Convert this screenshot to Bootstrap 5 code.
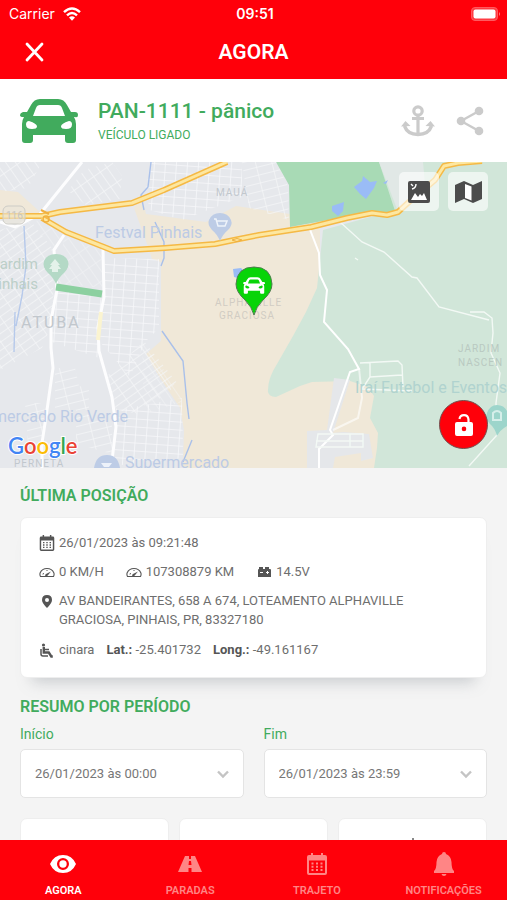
<!DOCTYPE html>
<html lang="pt-BR">
<head>
<meta charset="utf-8">
<meta name="viewport" content="width=device-width, initial-scale=1">
<title>Agora</title>
<link href="https://cdn.jsdelivr.net/npm/bootstrap@5.3.0/dist/css/bootstrap.min.css" rel="stylesheet">
<style>
  body { font-family: Roboto, sans-serif; background: #f4f4f4; color: #6e6e6e; font-size: 14px; line-height: 20px; }
  svg { display: block; flex: none; }
  .brand-bg { background: #ff000a; color: #fff; }
  .status-bar { height: 28px; font-family: Inter, sans-serif; font-size: 14px; padding: 0 6px 0 9px; }
  .side { flex: 1 1 0; }
  .title-bar { height: 51px; padding: 0 22px 3px; }
  .title-bar h1 { font-size: 21px; line-height: 24px; font-weight: 600; }
  .green { color: #41ab5d; }
  .vehicle { height: 83px; padding: 0 22px 0 20px; background: #fff; }
  .vehicle h2 { font-size: 21px; line-height: 24px; font-weight: 500; }
  .vehicle p { font-size: 12px; line-height: 16px; padding-top: 4px; }
  .plain { background: none; border: 0; padding: 0; color: inherit; }
  .vehicle .pale { color: #cbcbcb; }
  .map-area { height: 306px; }
  .map-tools { top: 10px; right: 19px; gap: 9px; }
  .map-tool { width: 40px; height: 39px; border: 0; border-radius: 5px; background: rgba(255,255,255,.6); color: #4c4c4c; padding: 0; }
  .unlock { right: 19px; bottom: 19px; width: 49px; height: 49px; border: 1px solid #70504f; padding: 0; }
  .content { padding: 18px 20px 0; }
  .content h3 { font-size: 16px; line-height: 20px; font-weight: 600; }
  .panel { background: #fff; border: 1px solid #eee; border-radius: 7px; }
  .position { padding: 15px 19px 17px 18px; margin-top: 11px; margin-bottom: 19px; font-size: 13px; box-shadow: 0 16px 14px -12px rgba(120,130,138,.35); }
  .ico { width: 16px; height: 16px; margin-right: 4px; color: #555; }
  .line-b { margin-top: 9px; gap: 22px; }
  .addr { margin-top: 9px; line-height: 19px; }
  .driver { margin-top: 11px; gap: 12px; }
  .driver strong { color: #555; font-weight: 700; }
  .period { margin-top: 7px; gap: 20px; }
  .period label { line-height: 20px; margin-bottom: 5px; }
  .period select { height: 49px; border: 1px solid #e4e4e4; border-radius: 5px; padding: 0 32px 0 14px; font-size: 13px; color: #777; background-color: #fff;
    background-image: url("data:image/svg+xml,%3Csvg xmlns='http://www.w3.org/2000/svg' viewBox='0 0 14 14'%3E%3Cpath d='M2 4.5l5 5 5-5' fill='none' stroke='%23c4c4c4' stroke-width='2.4'/%3E%3C/svg%3E"); background-size: 14px 14px; background-position: right 13px center; }
  .totals { margin-top: 20px; gap: 10px; }
  .totals .panel { height: 96px; padding-top: 19px; }
  .tabs { height: 60px; font-size: 11px; line-height: 12px; font-weight: 600; }
  .tabs a { flex: 1 1 0; color: #ff8585; padding: 10px 0 3px; }
  .tabs a.on { color: #fff; }
  .map-text { font-family: Roboto, sans-serif; }
</style>
<script src="https://cdn.jsdelivr.net/npm/bootstrap@5.3.0/dist/js/bootstrap.bundle.min.js"></script>
</head>
<body>
<svg width="0" height="0" class="position-absolute" aria-hidden="true">
  <symbol id="car" viewBox="0 0 58 44">
    <path fill-rule="evenodd" d="M20 0h18q6 0 9 6l4 7h4q3 0 3 3t-3 2h-1q2 3 2 7v16q0 3-3 3h-5q-3 0-3-3v-5H13v5q0 3-3 3H5q-3 0-3-3V25q0-4 2-7H3q-3 0-3-2t3-3h4l4-7q3-6 9-6zM20 6q-3 0-4 3l-3 8h32l-3-8q-1-3-4-3zM9 22q-3 0-3 3.500 0 4.500 6 4.500 5 0 5-2.500 0-3-8-5.500zM49 22q3 0 3 3.500 0 4.500-6 4.500-5 0-5-2.500 0-3 8-5.500z" fill="currentColor"/>
  </symbol>
  <symbol id="calendar" viewBox="0 0 20 22">
    <path fill-rule="evenodd" fill="currentColor" d="M4 0h2v2h8V0h2v2h2q2 0 2 2v16q0 2-2 2H2q-2 0-2-2V4q0-2 2-2h2zM2 7.500v12.500h16V7.500z"/>
    <path fill="currentColor" d="M4.500 9.500h2v2h-2zM9 9.500h2v2H9zM13.500 9.500h2v2h-2zM4.500 12.800h2v2h-2zM9 12.800h2v2H9zM13.500 12.800h2v2h-2zM4.500 16h2v2h-2zM9 16h2v2H9zM13.500 16h2v2h-2z"/>
  </symbol>
  <symbol id="gauge" viewBox="0 0 16 16">
    <path d="M1.500 12.500Q.5 10.500 1.200 8.800 3 4.500 8 4.500t6.800 4.300q.7 1.700-.3 3.700z" fill="none" stroke="currentColor" stroke-width="1.100"/>
    <path d="M6 11.500q0-1 1-1.500l5-2.500-3.500 4.200q-1.500 1-2.500-.2z" fill="currentColor"/><path d="M4 10.500l.5-1.500M7.500 6.500h1" stroke="currentColor"/>
  </symbol>
</svg>

<div class="d-flex flex-column vh-100 overflow-hidden">
  <header class="brand-bg flex-shrink-0">
    <div class="status-bar d-flex align-items-center">
      <div class="side d-flex align-items-center gap-2"><span>Carrier</span>
        <svg width="18" height="14" viewBox="0 0 18 14" fill="none" stroke="#fff" stroke-width="2.400"><path d="M1 5.200q8-7.600 16 0M4 8.400q5-4.700 10 0"/><path d="M6 10.600q3-2.600 6 0L9 13.800z" fill="#fff" stroke="none"/></svg>
      </div>
      <span class="fw-semibold">09:51</span>
      <div class="side d-flex justify-content-end">
        <svg width="30" height="14" viewBox="0 0 30 14"><rect x=".5" y=".5" width="26" height="13" rx="3.500" fill="#ff3b42" stroke="#ff5a5f"/><rect x="2.500" y="2.500" width="22" height="9" rx="2" fill="#fff"/><path d="M28 5q2 2 0 4z" fill="#ff7a7e"/></svg>
      </div>
    </div>
    <div class="title-bar d-flex align-items-center">
      <div class="side"><button class="plain d-block" type="button" aria-label="Fechar"><svg width="24" height="24" viewBox="0 0 24 24"><path d="M5 4l15 16M20 4L5 20" stroke="#fff" stroke-width="2.800" stroke-linecap="round"/></svg></button></div>
      <h1 class="m-0">AGORA</h1>
      <div class="side"></div>
    </div>
  </header>

  <section class="vehicle d-flex align-items-center flex-shrink-0">
    <svg class="green" width="58" height="44"><use href="#car"/></svg>
    <div class="green flex-grow-1 ps-3 ms-1">
      <h2 class="m-0">PAN-1111 - pânico</h2>
      <p class="m-0">VEÍCULO LIGADO</p>
    </div>
    <button class="plain pale me-3" type="button" aria-label="Âncora">
      <svg width="34" height="32" viewBox="0 0 34 32" fill="none" stroke="currentColor" stroke-width="3.200"><circle cx="17" cy="6" r="4.200"/><path d="M17 10v20M11 13.500h12"/><path d="M3.500 21q3 8.500 13.500 8.500T30.500 21" stroke-width="3.600"/><path d="M0 21.500L4.500 16l5 5zM34 21.500L29.500 16l-5 5z" fill="currentColor" stroke="none"/></svg>
    </button>
    <button class="plain pale ms-1" type="button" aria-label="Compartilhar">
      <svg width="30" height="30" viewBox="0 0 30 30"><path d="M24 5L6 15l18 10" fill="none" stroke="currentColor" stroke-width="2.400"/><g fill="currentColor"><circle cx="24" cy="5" r="4.300"/><circle cx="6" cy="15" r="4.300"/><circle cx="24" cy="25" r="4.300"/></g></svg>
    </button>
  </section>

  <section class="map-area position-relative flex-shrink-0 overflow-hidden">
    <svg class="map-text" width="100%" height="100%" viewBox="0 162 507 306" preserveAspectRatio="xMidYMid slice" role="img" aria-label="Mapa">
      <defs>
        <pattern id="g1" width="11" height="8" patternUnits="userSpaceOnUse" patternTransform="rotate(4)"><path d="M0 0H11M0 0V8" stroke="#f7f8fa" stroke-width="1.600"/></pattern>
        <pattern id="g2" width="14" height="7" patternUnits="userSpaceOnUse" patternTransform="rotate(-35)"><path d="M0 0H14M0 0V7" stroke="#f5f6f8" stroke-width="1.500"/></pattern>
        <pattern id="g3" width="16" height="8" patternUnits="userSpaceOnUse" patternTransform="rotate(-14)"><path d="M0 0H16M0 0V8" stroke="#f5f6f8" stroke-width="1.500"/></pattern>
        <pattern id="g4" width="18" height="8" patternUnits="userSpaceOnUse" patternTransform="rotate(55)"><path d="M0 0H18M0 0V8" stroke="#f5f6f8" stroke-width="1.500"/></pattern>
      </defs>
      <rect y="162" width="507" height="306" fill="#e6e8ec"/>
      <path d="M0 190l18 2 22 20v4H0z" fill="#f0e8d9"/>
      <path d="M134 208l8-11 4 17 60 8 30-16 54 8 30 12v60l60 100 4 82H183l1-38-4-22-20-30-14-24 15-13V262l-9-3-6-18z" fill="#f0e8d8"/>
      <path d="M378 162H507V468H374l3-20 1-15-8-15 4-22-6-9-18-6-38 1-12 4-24 11q-9-1-8-7 0-12 9-26l16-28 13-24 11-24 6-58 58-16z" fill="#d1e6d9"/>
      <path d="M276 162h103l16 49-10 4-15-2-31 5-49 9-1-42z" fill="#a8dab5"/>
      <path d="M379 162h44l2 22-28 25z" fill="#e1e8e6"/>
      <path d="M354 187l8-6 1-5 7 6 7-1-3 7-8 11-6-5zM332 206l12-4-1 9-5 5-6-5zM383 183l5-3-2 4zM233 269l8-1 5 5-4 6-8-2z" fill="#9abcf6"/>
      <path d="M334 378l16 2-17 53 10-1 26 2 4 24-12 3v-8l-26 4-2 11h-26v-37l20-1z" fill="#e5e7ea"/>
      <!-- street blocks -->
      <path d="M0 162h42l-14 26-28 4z" fill="url(#g4)"/>
      <path d="M84 170l28-8 10 14-2 23-34 6-18-14z" fill="url(#g4)"/>
      <path d="M152 162h90v35l-60 23-32-10-5-20z" fill="url(#g1)"/>
      <path d="M242 162h34l12 24 1 34-40-12z" fill="url(#g3)"/>
      <path d="M0 230l30-10 22 28 2 70-12 30-42 22z" fill="url(#g2)"/>
      <path d="M28 222l14-2 22 14-10 20zM64 236l38 14v38l-44-5z" fill="url(#g4)" opacity=".6"/>
      <path d="M56 288l46 10-3 60-47-16-2-30z" fill="url(#g1)"/>
      <path d="M105 258l54 1v69l-14 14-15 35-30-35z" fill="url(#g1)"/>
      <path d="M108 375l36-34 34 43-38 30-24-4z" fill="url(#g2)"/>
      <path d="M142 340l38 52 2 10-38 12z" fill="url(#g4)" opacity=".6"/>
      <path d="M118 410l64-12 1 60-70 8z" fill="url(#g1)"/>
      <path d="M55 368h20l4 18 10 2v22h-34zM25 403h20l-3 42H28zM76 410l36 14v30l-36-10z" fill="url(#g3)"/>
      <!-- streams -->
      <g fill="none" stroke="#a9c0ea" stroke-width="1.400"><path d="M151 162l-3 25-7 8 3 15M155 222l9 20v16l-3 8"/><path d="M24 226l2 40-4 30-6 30M15 312l-1 40" opacity=".8"/><path d="M162 331l21 30 4 42 2 16M192 440l-9 22"/></g>
      <!-- local roads -->
      <g fill="none" stroke="#fdfdfe" stroke-width="3"><path d="M82 162L40 214l-25 13-15-5M64 235l-10 15 3 40-6 30v28l2 20-6 42-5 33v25M103 249l1 48-6 30 1 24 13 46 4 30-5 42"/></g>
      <path d="M101 312l-3 28" stroke="#fbf4d0" stroke-width="4"/>
      <g fill="none" stroke="#fff" stroke-width="2"><path d="M309 227l10 26 1 22 7 15-3 32 24 27 11 20-9 3-20 58 3 5-14 14v19"/><path d="M359 368l3 30-4 20-25 12" opacity=".6"/></g>
      <g fill="none" stroke="#f3f9f5" stroke-width="1.400"><path d="M340 222l22 20 22 10 28 25 5 1 22 29 50 13M470 312h14l8 6 1 15-2 20 9 20-4 30 1 32-28 31M360 363l38-2 4 4 1 22M370 363v14l32-2M370 377l-8 12 50 2M318 434h45v13h-47zM316 441h47M350 434v13M355 258l3 2"/></g>
      <g stroke="#8cd0a0" stroke-width="7"><path d="M56 287l46 7"/></g>
      <!-- highways -->
      <g fill="none" stroke-linejoin="round">
        <path d="M0 216h42l18-4 72-9 32-13 63-28M42 218l24 14 38 15 10 4 51-3 50-4 24-5 20-4 52-8 36-9 25-5 15 2 11-3 11-10 26-22 9-14 14-3 24-2" stroke="#f5b945" stroke-width="6"/>
        <path d="M0 216h42l18-4 72-9 32-13 63-28M42 218l24 14 38 15 10 4 51-3 50-4 24-5 20-4 52-8 36-9 25-5 15 2 11-3 11-10 26-22 9-14 14-3 24-2" stroke="#fde7a0" stroke-width="3"/>
        <circle cx="46" cy="219" r="3" stroke="#f0b040" stroke-width="1.500"/><path d="M41 210l8 4" stroke="#f0b040" stroke-width="2"/><path d="M232 240q5-3 10 0-5 3-10 0z" stroke="#f0b040"/>
      </g>
      <rect x="3" y="206" width="22" height="18" rx="5" fill="#e9e4d8" fill-opacity=".6" stroke="#cdccc6"/>
      <text x="6" y="219" font-size="10" fill="#c6c5c2">116</text>
      <!-- place names -->
      <g fill="#c1c7cd" font-size="10">
        <text x="216" y="196" letter-spacing="1">MAUÁ</text>
        <text x="215" y="306" letter-spacing="1" fill="#d1ccc3">ALPHAVILLE</text>
        <text x="219" y="319" letter-spacing="1" fill="#d1ccc3">GRACIOSA</text>
        <text x="21" y="328" font-size="16" letter-spacing="2">ATUBA</text>
        <text x="458" y="352" letter-spacing="1" fill="#b9c9c1">JARDIM</text>
        <text x="458" y="366" letter-spacing="1" fill="#b9c9c1">NASCEN</text>
        <text x="14" y="467" letter-spacing="1">PERNETA</text>
      </g>
      <g font-size="16">
        <text x="95" y="238" fill="#bccbe5">Festval Pinhais</text>
        <text x="38" y="269" font-size="15" text-anchor="end" fill="#bccfc8">Jardim</text>
        <text x="38" y="289" font-size="15" text-anchor="end" fill="#bccfc8">Pinhais</text>
        <text x="128" y="422" text-anchor="end" fill="#bccbe5">Supermercado Rio Verde</text>
        <text x="125" y="468" fill="#bccbe5">Supermercado</text>
        <text x="355" y="393" fill="#b0d3cf">Iraí Futebol e Eventos</text>
      </g>
      <!-- place pins -->
      <path d="M220 241q-3-7-8-11-5-6-3-10 3-7 11-7t11 7q2 5-3 10-5 4-8 11z" fill="#bdcce6"/><path d="M214 219h2l2 7h7l2-5h-10" stroke="#eef3fa" fill="none" stroke-width="1.500"/>
      <path d="M56 284q-3-7-8-11-6-6-4-12 3-7 12-7t12 7q2 6-4 12-5 4-8 11z" fill="#b4d9c6"/><path d="M52 272v-3h-3l3-4h-2l5-6 5 6h-2l3 4h-3v3z" fill="#e4f2ea"/>
      <path d="M497 436q-2-8-7-12-5-5-3-11 3-8 10-8t10 6v15q-7 4-10 10z" fill="#9dd5cb"/><path d="M493 420v-7q4-4 8 0v7z" fill="none" stroke="#d6efea" stroke-width="2"/>
      <path d="M94 468q2-13 13-13t13 13z" fill="#bdcce6"/><path d="M101 463h11l-3 4h-5z" fill="#edf2fa"/>
      <text x="8" y="454" font-size="22" font-weight="600" font-family="Lato, sans-serif" stroke="#fff" stroke-width="2" paint-order="stroke"><tspan fill="#4285f4">G</tspan><tspan fill="#ea4335">o</tspan><tspan fill="#fbbc05">o</tspan><tspan fill="#4285f4">g</tspan><tspan fill="#34a853">l</tspan><tspan fill="#ea4335">e</tspan></text>
      <!-- vehicle marker -->
      <path d="M254 315q-2-8-9-15-9-8-9-16 1-17 18-17t18 17q0 8-9 16-7 7-9 15z" fill="#08d408" stroke="#4f7d4f"/>
      <svg x="243" y="277" width="22" height="17" color="#fff"><use href="#car"/></svg>
    </svg>
    <div class="map-tools position-absolute d-flex">
      <button class="map-tool d-flex align-items-center justify-content-center" type="button" aria-label="Satélite"><svg width="22" height="22" viewBox="0 0 22 22"><rect width="22" height="22" rx="2" fill="currentColor"/><path d="M3 19l4-7 3 4 2-3 2 2 2-3 3 7z" fill="#fff"/><path d="M3 3l2 2M8 3q0 4-4 5" stroke="#fff" stroke-width="1.400" fill="none"/></svg></button>
      <button class="map-tool d-flex align-items-center justify-content-center" type="button" aria-label="Mapa"><svg width="27" height="22" viewBox="0 0 27 22" fill="currentColor"><path d="M0 4l9-4v18l-9 4zM18 4l9-4v18l-9 4z"/><path d="M9 0l9 4v18l-9-4z"/><path d="M10 3l6.500 2.500v14L10 17z" fill="#fff"/></svg></button>
    </div>
    <button class="unlock brand-bg rounded-circle position-absolute d-flex align-items-center justify-content-center" type="button" aria-label="Desbloquear"><svg width="18" height="22" viewBox="0 0 18 22"><path d="M4.500 5Q5 1.200 9 1.200T13.500 5.500V9" fill="none" stroke="#fff" stroke-width="2.200"/><path fill-rule="evenodd" d="M2 8h14q2 0 2 2v10q0 2-2 2H2q-2 0-2-2V10q0-2 2-2zM9 12.600a2.300 2.300 0 100 4.600 2.300 2.300 0 000-4.600z" fill="#fff"/></svg></button>
  </section>

  <main class="content flex-grow-1 overflow-hidden">
    <h3 class="green m-0">ÚLTIMA POSIÇÃO</h3>
    <div class="panel position">
      <div class="d-flex align-items-center"><svg class="ico"><use href="#calendar"/></svg>26/01/2023 às 09:21:48</div>
      <div class="line-b d-flex">
        <span class="d-flex align-items-center"><svg class="ico"><use href="#gauge"/></svg>0 KM/H</span>
        <span class="d-flex align-items-center"><svg class="ico"><use href="#gauge"/></svg>107308879 KM</span>
        <span class="d-flex align-items-center"><svg class="ico" viewBox="0 0 16 16"><path fill-rule="evenodd" d="M3 3h4v2h2V3h4v2h1q1 0 1 1v7H2V6q0-1 1-1zM4 8v1h3V8zM11 7v1h-1v1h1v1h1V9h1V8h-1V7z" fill="currentColor"/></svg>14.5V</span>
      </div>
      <div class="addr d-flex"><svg class="ico mt-1" viewBox="0 0 16 16"><path fill-rule="evenodd" d="M8 0q5 0 5 5 0 3-5 8-5-5-5-8 0-5 5-5zm0 3a2 2 0 100 4 2 2 0 000-4z" fill="currentColor"/></svg><span>AV BANDEIRANTES, 658 A 674, LOTEAMENTO ALPHAVILLE GRACIOSA, PINHAIS, PR, 83327180</span></div>
      <div class="driver d-flex">
        <span class="d-flex align-items-center"><svg class="ico" viewBox="0 0 16 16" fill="none" stroke="currentColor"><circle cx="4.500" cy="3" r="1.600" fill="currentColor" stroke="none"/><path d="M4.800 5v5.500h5l2.500 4h1.500" stroke-width="2.400"/><path d="M5 7.500h5M2 7v5q0 2 2 2h5" stroke-width="1.500"/></svg>cinara</span>
        <span><strong>Lat.:</strong> -25.401732</span>
        <span><strong>Long.:</strong> -49.161167</span>
      </div>
    </div>
    <h3 class="green m-0">RESUMO POR PERÍODO</h3>
    <div class="period d-flex">
      <div class="side"><label class="green d-block" for="inicio">Início</label><select class="form-select" id="inicio"><option>26/01/2023 às 00:00</option></select></div>
      <div class="side"><label class="green d-block" for="fim">Fim</label><select class="form-select" id="fim"><option>26/01/2023 às 23:59</option></select></div>
    </div>
    <div class="totals d-flex">
      <div class="panel side"></div>
      <div class="panel side"></div>
      <div class="panel side"><svg class="mx-auto" width="20" height="24" viewBox="0 0 20 24"><path d="M10 0v4" stroke="#888" stroke-width="2"/><circle cx="10" cy="14" r="8" fill="none" stroke="#888" stroke-width="2"/></svg></div>
    </div>
  </main>

  <nav class="tabs brand-bg d-flex flex-shrink-0 text-center">
    <a class="on text-decoration-none d-flex flex-column justify-content-between align-items-center" href="#agora"><svg width="28" height="28" viewBox="0 0 28 28"><path fill-rule="evenodd" d="M1 14q4-9 13-9t13 9q-4 9-13 9T1 14zM14 8a6 6 0 100 12 6 6 0 000-12z" fill="currentColor"/><circle cx="14" cy="14" r="3.700" fill="currentColor"/></svg>AGORA</a>
    <a class="text-decoration-none d-flex flex-column justify-content-between align-items-center" href="#paradas"><svg width="28" height="28" viewBox="0 0 28 28"><path fill-rule="evenodd" d="M9 6h4v3h2V6h4l7 16H15.500v-4h-3v4H2zM13 11l-.5 4h3l-.5-4z" fill="currentColor"/></svg>PARADAS</a>
    <a class="text-decoration-none d-flex flex-column justify-content-between align-items-center" href="#trajeto"><svg width="28" height="28" viewBox="0 0 28 28"><use href="#calendar" x="4" y="3" width="20" height="22"/></svg>TRAJETO</a>
    <a class="text-decoration-none d-flex flex-column justify-content-between align-items-center" href="#notificacoes"><svg width="28" height="28" viewBox="0 0 28 28"><path d="M14 2q2 0 2 2 5 2 5.500 8 0 7 2.500 9v2H4v-2q2.500-2 2.500-9Q7 6 12 4q0-2 2-2zM11.500 24h5q-.5 2-2.500 2t-2.500-2z" fill="currentColor"/></svg>NOTIFICAÇÕES</a>
  </nav>
</div>
</body>
</html>
